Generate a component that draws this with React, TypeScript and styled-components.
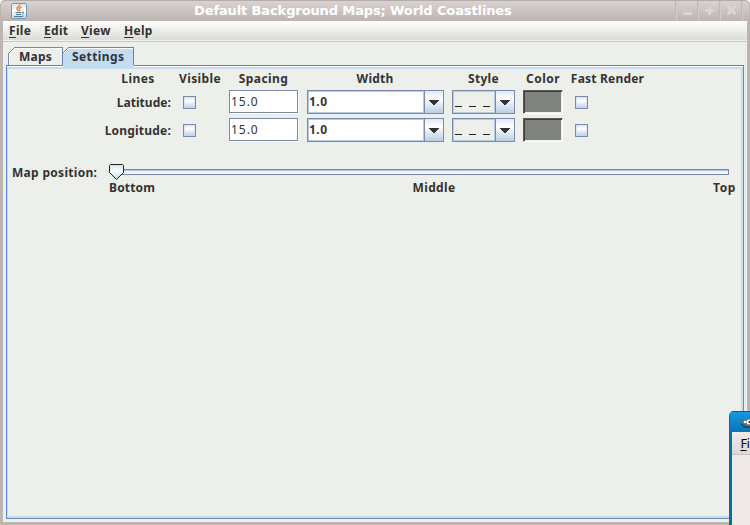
import React from "react";
import styled, { createGlobalStyle } from "styled-components";

const Global = createGlobalStyle`
  * { box-sizing: border-box; }
  html, body { margin: 0; overflow: hidden; background: #fff; }
  body { font: bold 12px/16px "Noto Sans", "Open Sans", sans-serif; color: #333; }
`;

const Desktop = styled.div`
  position: relative;
  width: 750px;
  height: 525px;
  overflow: hidden;
`;

const Frame = styled.div`
  display: flex;
  flex-direction: column;
  width: 750px;
  height: 525px;
  padding: 0 3px 3px;
  background: #bdb5b2;
  border-radius: 5px 5px 0 0;
`;

const TitleBar = styled.header`
  display: flex;
  flex: 0 0 21px;
  margin: 0 -2px;
  padding-left: 10px;
  border-top: 1px solid #b4acaa;
  border-radius: 5px 5px 0 0;
  background: linear-gradient(#d9d2d0, #bdb5b2);
`;

const Title = styled.h1`
  flex: 1;
  margin: 0;
  padding-left: 167px;
  font: bold 13px/19px "DejaVu Sans", sans-serif;
  letter-spacing: -0.115px;
  color: #fff;
  white-space: nowrap;
`;

const TitleButtons = styled.div`
  display: flex;
  width: 73px;
`;

const TitleButton = styled.div`
  width: 22px;
  height: 20px;
  border-left: 1px solid #d2cbc8;
  box-shadow: -1px 0 #bfb7b4;
  svg { display: block; }
`;

const MenuBar = styled.nav`
  display: flex;
  flex: 0 0 21px;
  height: 21px;
  padding-left: 6px;
  background: linear-gradient(#fff, #dadcd8 19px, #f0f2ee 19px, #f0f2ee 20px, #c6c9c5 20px);
`;

const MenuItem = styled.span<{ $w: number }>`
  width: ${(p) => p.$w}px;
  line-height: 20px;
  letter-spacing: 0.3px;
  u { text-decoration-thickness: 1px; text-underline-offset: 2px; }
`;

const Content = styled.main`
  display: flex;
  flex-direction: column;
  flex: 1;
  padding: 5px 3px 3px;
  background: #edefea;
`;

const Tabs = styled.div`
  display: flex;
  height: 18px;
  padding-left: 2px;
`;

const Tab = styled.div<{ $w: number; $active?: boolean }>`
  position: relative;
  z-index: 1;
  width: ${(p) => p.$w}px;
  height: ${(p) => (p.$active ? 20 : 18)}px;
  svg { display: block; }
`;

const TabText = styled.span<{ $left: number; $ls: number }>`
  position: absolute;
  left: ${(p) => p.$left}px;
  top: 2px;
  letter-spacing: ${(p) => p.$ls}px;
`;

const Pane = styled.section`
  flex: 1;
  border: 1px solid;
  border-color: #6382bf #7388ae #7388ae #5b8bd0;
  box-shadow: inset 0 1px #fff, inset 0 3px #c3dcf2, inset 1px 0 #c3dcf2, inset -2px -2px #c3dcf2;
  padding: 5px 6px 0 5px;
`;

const Grid = styled.div`
  display: grid;
  grid-template-columns: 66px 42px 69px 138px 63px 40px 73px;
  grid-template-rows: 16px 24px 24px;
  column-gap: 8px;
  row-gap: 4px;
  padding-left: 93px;
`;

const Head = styled.span<{ $ls?: number }>`
  justify-self: center;
  white-space: nowrap;
  letter-spacing: ${(p) => p.$ls ?? 0.4}px;
`;

const RowLabel = styled.label<{ $ls: number }>`
  justify-self: end;
  line-height: 24px;
  white-space: nowrap;
  letter-spacing: ${(p) => p.$ls}px;
`;

const CheckBox = styled.span`
  width: 13px;
  height: 13px;
  margin: 5px 0 0 4px;
  border: 1px solid #7a8aa8;
  background: linear-gradient(#dfe9f5, #fff 35%, #b8cfe5);
  box-shadow: inset 0 0 0 1px rgba(200, 215, 235, 0.5);
`;

const Field = styled.span`
  height: 23px;
  margin-top: -1px;
  padding: 0 1px;
  border: 1px solid #7a8aa8;
  background: #fff;
  box-shadow: 1px 1px #fff;
  font-weight: 400;
  line-height: 22px;
  letter-spacing: 0.95px;
`;

const Combo = styled.span<{ $wide?: boolean }>`
  display: flex;
  height: 24px;
  margin: -1px 0 0 ${(p) => (p.$wide ? 1 : 0)}px;
  border: 1px solid #7a8aa8;
`;

const ComboValue = styled.span<{ $plain?: boolean }>`
  flex: 1;
  border: 1px solid #b0cbe8;
  background: ${(p) => (p.$plain ? "#edefea" : "#fff")};
  line-height: 20px;
  letter-spacing: 0.5px;
  svg { display: block; }
`;

const ComboButton = styled.span`
  width: 19px;
  border-left: 1px solid #7a8aa8;
  background: linear-gradient(#dfe9f5, #fff 35%, #b8cfe5);
  svg { display: block; }
`;

const Swatch = styled.span`
  height: 24px;
  margin-top: -1px;
  border: 1px solid;
  border-color: #5a5b58 #fff #fff #5a5b58;
  background: #808280;
  box-shadow: inset 1px 1px #3f413e, inset -1px -1px #edefea;
`;

const SliderRow = styled.div`
  display: grid;
  grid-template-columns: 97px 627px;
  padding-top: 21px;
`;

const SliderLabel = styled.span`
  line-height: 17px;
  letter-spacing: 0.3px;
  white-space: nowrap;
`;

const SliderBody = styled.div`
  svg { display: block; }
`;

const Ticks = styled.div`
  display: flex;
  justify-content: space-between;
  width: 627px;
  letter-spacing: 0.2px;
`;

const Tick = styled.span<{ $ls?: number }>`
  letter-spacing: ${(p) => p.$ls ?? 0.2}px;
`;

const OtherWindow = styled.aside`
  position: absolute;
  left: 729px;
  top: 411px;
  width: 40px;
  height: 130px;
  padding-left: 3px;
  border-radius: 5px 0 0 0;
  background: #0e6c9b;
  overflow: hidden;
`;

const OtherTitle = styled.div`
  height: 21px;
  margin-left: -2px;
  background: linear-gradient(#0b5d91 1px, #1698e0 1px, #0873b5);
  svg { display: block; }
`;

const OtherMenu = styled.div`
  height: 23px;
  padding-left: 8.5px;
  border-bottom: 1px solid #cbc4c2;
  background: linear-gradient(#efebe9, #ddd7d5);
  color: #000;
  font: 12px/24px "DejaVu Sans", sans-serif;
  u { text-decoration-thickness: 1px; text-underline-offset: 2px; }
`;

const OtherBody = styled.div`
  height: 90px;
  background: #eee9e7;
`;

const IconHolder = styled.span`
  width: 16px;
  padding-top: 2px;
  svg { display: block; }
`;

const ArrowButton = () => (
  <ComboButton>
    <svg width="18" height="22" shapeRendering="crispEdges">
      <path d="M4 9h10v1H4zM5 10h8v1H5zM6 11h6v1H6zM7 12h4v1H7zM8 13h2v1H8z" fill="#333" />
    </svg>
  </ComboButton>
);

const SettingsRow = ({ name, ls }: { name: string; ls: number }) => (
  <>
    <RowLabel $ls={ls}>{name}</RowLabel>
    <CheckBox />
    <Field>15.0</Field>
    <Combo $wide>
      <ComboValue>1.0</ComboValue>
      <ArrowButton />
    </Combo>
    <Combo>
      <ComboValue $plain>
        <svg width="40" height="20" shapeRendering="crispEdges">
          <path d="M1 14h7v1H1zM15 14h7v1H15zM29 14h7v1H29z" fill="#222" />
        </svg>
      </ComboValue>
      <ArrowButton />
    </Combo>
    <Swatch />
    <CheckBox />
  </>
);

const JavaIcon = () => (
  <svg width="16" height="16" viewBox="0 0 16 16">
    <defs>
      <linearGradient id="jv" x2="0" y2="1">
        <stop stopColor="#d5e2ea" />
        <stop offset=".5" stopColor="#fff" />
        <stop offset="1" stopColor="#c5d5df" />
      </linearGradient>
    </defs>
    <rect x=".5" y=".5" width="15" height="15" rx="1" fill="url(#jv)" stroke="#7895a8" />
    <path d="M9 1.500C9 3.500 5.500 4 6 6c.2.800 1 1.300 1.200 2.200M10.500 4C8.300 5 7.800 5.600 8.600 6.600c.4.600 0 1.200-.2 1.600" fill="none" stroke="#ee8420" strokeWidth="1.400" />
    <path d="M4.500 9.500h6M5 11.500h5M3 13.500h8l1.500-.5M11 9.200c2.200-.6 2.500 1.300 0 2" fill="none" stroke="#4f7c9c" />
  </svg>
);

export default function App() {
  return (
    <Desktop>
      <Global />
      <Frame>
        <TitleBar>
          <IconHolder><JavaIcon /></IconHolder>
          <Title>Default Background Maps; World Coastlines</Title>
          <TitleButtons>
            <TitleButton>
              <svg width="21" height="20"><path d="M7.500 12.500h6" stroke="#dcd6d3" strokeWidth="3" strokeLinecap="round" /></svg>
            </TitleButton>
            <TitleButton>
              <svg width="21" height="20"><path d="M7.500 9.500h6M10.500 6.500v6" stroke="#dcd6d3" strokeWidth="3" strokeLinecap="round" /></svg>
            </TitleButton>
            <TitleButton>
              <svg width="21" height="20"><path d="M7.500 6l6 6M13.500 6l-6 6" stroke="#dcd6d3" strokeWidth="3" strokeLinecap="round" /></svg>
            </TitleButton>
            <TitleButton />
          </TitleButtons>
        </TitleBar>
        <MenuBar>
          <MenuItem $w={35}><u>F</u>ile</MenuItem>
          <MenuItem $w={37}><u>E</u>dit</MenuItem>
          <MenuItem $w={43}><u>V</u>iew</MenuItem>
          <MenuItem $w={40}><u>H</u>elp</MenuItem>
        </MenuBar>
        <Content>
          <Tabs>
            <Tab $w={54}>
              <svg width="55" height="18" shapeRendering="crispEdges">
                <path d="M.5 18V6.500L6.500.5H54.500V6" fill="none" stroke="#7388ae" />
                <path d="M1.500 18V7L7 1.500H54" fill="none" stroke="#fafbf9" />
              </svg>
              <TabText $left={11} $ls={0.2}>Maps</TabText>
            </Tab>
            <Tab $w={72} $active>
              <svg width="72" height="20" shapeRendering="crispEdges">
                <path d="M1 20V6L6.500.5H71.500V20z" fill="#c3dcf2" />
                <path d="M.5 18V6.500L6.500.5H71.500V18" fill="none" stroke="#6382bf" />
                <path d="M1.500 6.500L6.500 1.500H71" fill="none" stroke="#fff" />
                <path d="M.5 0V6" stroke="#7388ae" />
              </svg>
              <TabText $left={10} $ls={0.4}>Settings</TabText>
            </Tab>
          </Tabs>
          <Pane>
            <Grid>
              <Head>Lines</Head>
              <Head>Visible</Head>
              <Head>Spacing</Head>
              <Head $ls={0.2}>Width</Head>
              <Head $ls={0.3}>Style</Head>
              <Head $ls={0.5}>Color</Head>
              <Head $ls={0.2}>Fast Render</Head>
              <SettingsRow name="Latitude:" ls={0.05} />
              <SettingsRow name="Longitude:" ls={0.2} />
            </Grid>
            <SliderRow>
              <SliderLabel>Map position:</SliderLabel>
              <SliderBody>
                <svg width="627" height="16" shapeRendering="crispEdges">
                  <defs>
                    <linearGradient id="thumb" x2="0" y2="1">
                      <stop stopColor="#cfe0f3" />
                      <stop offset=".45" stopColor="#fff" />
                      <stop offset="1" stopColor="#b8cfe5" />
                    </linearGradient>
                  </defs>
                  <path d="M8 5.500H619.500V10.500H8z" fill="#f2f4f1" stroke="#7a8aa8" />
                  <path d="M8 6.500H619" stroke="#a9c3e3" />
                  <path d="M1.500.5h12l1 1v7l-7 7-7-7v-7z" fill="url(#thumb)" stroke="#222" shapeRendering="auto" />
                </svg>
                <Ticks>
                  <Tick $ls={0.15}>Bottom</Tick>
                  <Tick $ls={0.35}>Middle</Tick>
                  <Tick $ls={0.6}>Top</Tick>
                </Ticks>
              </SliderBody>
            </SliderRow>
          </Pane>
        </Content>
      </Frame>
      <OtherWindow>
        <OtherTitle>
          <svg width="30" height="21">
            <path d="M10 8l2 0 3 2 2-2 5-1v9c-4 1-6 0-8-3-2 0-3-2-4-5z" fill="#6b6963" />
            <circle cx="15" cy="11" r="1.300" fill="#fff" />
            <circle cx="19" cy="11" r="2.500" fill="#fff" />
            <circle cx="19.500" cy="11" r="1" fill="#111" />
            <path d="M11 13l4 3h6" stroke="#222" fill="none" />
          </svg>
        </OtherTitle>
        <OtherMenu><u>F</u>ile</OtherMenu>
        <OtherBody />
      </OtherWindow>
    </Desktop>
  );
}
